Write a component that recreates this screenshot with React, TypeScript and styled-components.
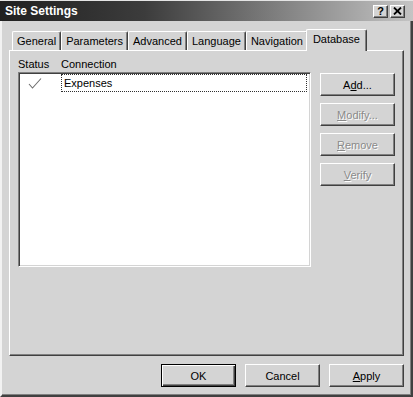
import React from "react";
import styled, { createGlobalStyle, css } from "styled-components";

const Global = createGlobalStyle`
  html, body { margin: 0; padding: 0; background: #d4d4d4; }
  body { font-family: "Liberation Sans", Arial, sans-serif; font-size: 11px; color: #000; }
  * { box-sizing: border-box; }
`;

const FACE = "#d4d4d4";

const Window = styled.div`
  width: 413px;
  height: 397px;
  display: flex;
  flex-direction: column;
  background: ${FACE};
  border-top: 1px solid #e4e4e4;
`;

const TitleBar = styled.div`
  height: 20px;
  display: flex;
  align-items: center;
  padding: 0 8px 0 5px;
  background: linear-gradient(to right, #202020 0%, #3c3c3c 35%, #c4c4c4 100%);
`;

const Title = styled.div`
  flex: 1;
  color: #fff;
  font-weight: bold;
  font-size: 12px;
`;

const CaptionButtons = styled.div`
  display: flex;
  gap: 2px;
`;

const CaptionButton = styled.div`
  width: 15px;
  height: 13px;
  background: ${FACE};
  border: 1px solid;
  border-color: #fff #404040 #404040 #fff;
  box-shadow: inset -1px -1px #808080;
  display: flex;
  align-items: center;
  justify-content: center;
  font-weight: bold;
  font-size: 11px;
  line-height: 1;
`;

const Body = styled.div`
  flex: 1;
  display: flex;
  flex-direction: column;
  border-left: 2px solid #f2f2f2;
  border-right: 2px solid #404040;
  border-bottom: 2px solid #404040;
  box-shadow: inset -1px -1px #808080;
  padding: 0 7px 8px 7px;
`;

const TabRow = styled.div`
  height: 29px;
  display: flex;
  align-items: flex-end;
  padding-left: 3px;
`;

const Tab = styled.div<{ $active?: boolean }>`
  height: 19px;
  display: flex;
  align-items: center;
  padding: 0 4px 1px 4px;
  background: ${FACE};
  border-top: 1px solid #fff;
  border-left: 1px solid #fff;
  border-right: 1px solid #404040;
  box-shadow: inset -1px 0 #808080;
  border-top-left-radius: 2px;
  border-top-right-radius: 2px;
  white-space: nowrap;
  ${(p) =>
    p.$active &&
    css`
      position: relative;
      z-index: 1;
      height: 22px;
      margin: 0 -2px -1px -2px;
      padding: 0 6px 4px 6px;
    `}
`;

const Panel = styled.div`
  height: 306px;
  background: ${FACE};
  border-top: 1px solid #fff;
  border-left: 1px solid #fff;
  border-right: 1px solid #404040;
  border-bottom: 1px solid #404040;
  box-shadow: inset -1px -1px #808080;
  padding: 6px 8px 8px 8px;
  display: flex;
  flex-direction: column;
`;

const HeaderRow = styled.div`
  height: 14px;
  line-height: 14px;
  display: flex;
  margin-bottom: 1px;
`;

const HeaderCell = styled.div<{ $w?: number }>`
  width: ${(p) => (p.$w ? `${p.$w}px` : "auto")};
`;

const Content = styled.div`
  display: flex;
  gap: 9px;
`;

const ListBox = styled.div`
  width: 293px;
  height: 195px;
  background: #fff;
  border: 1px solid;
  border-color: #808080 #fff #fff #808080;
  box-shadow: inset 1px 1px #404040, inset -1px -1px ${FACE};
  padding: 1px 2px 2px 2px;
`;

const ListRow = styled.div`
  height: 18px;
  display: flex;
  align-items: center;
`;

const CheckCell = styled.div`
  width: 40px;
  display: flex;
  align-items: center;
  padding-left: 7px;
`;

const FocusCell = styled.div`
  flex: 1;
  height: 18px;
  display: flex;
  align-items: center;
  padding-left: 2px;
  margin-right: 1px;
  border: 1px dotted #303030;
`;

const SideButtons = styled.div`
  display: flex;
  flex-direction: column;
  gap: 7px;
  margin-top: 1px;
`;

const Button = styled.div<{ $disabled?: boolean; $default?: boolean }>`
  width: 75px;
  height: 23px;
  display: flex;
  align-items: center;
  justify-content: center;
  background: ${FACE};
  border: 1px solid;
  border-color: #fff #404040 #404040 #fff;
  box-shadow: inset -1px -1px #808080;
  color: ${(p) => (p.$disabled ? "#8a8a8a" : "#000")};
  text-shadow: ${(p) => (p.$disabled ? "1px 1px 0 #fff" : "none")};
  ${(p) =>
    p.$default &&
    css`
      border: 1px solid #000;
      box-shadow: inset 1px 1px #fff, inset -1px -1px #404040, inset -2px -2px #808080;
    `}
  u { text-decoration: underline; text-underline-offset: 1px; }
`;

const BottomBar = styled.div`
  display: flex;
  justify-content: flex-end;
  gap: 9px;
  margin-top: 8px;
`;

const CheckIcon = () => (
  <svg width="14" height="13" viewBox="0 0 14 13">
    <path d="M1 7 L4.5 11 L13 1.5" fill="none" stroke="#6e6e6e" strokeWidth="1.1" />
  </svg>
);

const CloseGlyph = () => (
  <svg width="9" height="8" viewBox="0 0 9 8">
    <path d="M1 0.5 L8 7.5 M8 0.5 L1 7.5" stroke="#000" strokeWidth="1.8" />
  </svg>
);

const tabs = ["General", "Parameters", "Advanced", "Language", "Navigation", "Database"];

export default function App() {
  return (
    <>
      <Global />
      <Window>
        <TitleBar>
          <Title>Site Settings</Title>
          <CaptionButtons>
            <CaptionButton>?</CaptionButton>
            <CaptionButton>
              <CloseGlyph />
            </CaptionButton>
          </CaptionButtons>
        </TitleBar>
        <Body>
          <TabRow>
            {tabs.map((t) => (
              <Tab key={t} $active={t === "Database"}>
                {t}
              </Tab>
            ))}
          </TabRow>
          <Panel>
            <HeaderRow>
              <HeaderCell $w={43}>Status</HeaderCell>
              <HeaderCell>Connection</HeaderCell>
            </HeaderRow>
            <Content>
              <ListBox>
                <ListRow>
                  <CheckCell>
                    <CheckIcon />
                  </CheckCell>
                  <FocusCell>Expenses</FocusCell>
                </ListRow>
              </ListBox>
              <SideButtons>
                <Button>
                  <span>
                    A<u>d</u>d...
                  </span>
                </Button>
                <Button $disabled>
                  <span>
                    <u>M</u>odify...
                  </span>
                </Button>
                <Button $disabled>
                  <span>
                    <u>R</u>emove
                  </span>
                </Button>
                <Button $disabled>
                  <span>
                    <u>V</u>erify
                  </span>
                </Button>
              </SideButtons>
            </Content>
          </Panel>
          <BottomBar>
            <Button $default>OK</Button>
            <Button>Cancel</Button>
            <Button>
              <span>
                <u>A</u>pply
              </span>
            </Button>
          </BottomBar>
        </Body>
      </Window>
    </>
  );
}
